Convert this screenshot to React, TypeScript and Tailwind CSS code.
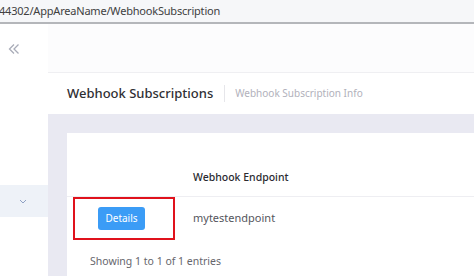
import React from 'react';

const rows = [{ endpoint: 'mytestendpoint' }];

const App = () => {
  return (
    <div className="flex flex-col w-[474px] h-[276px] overflow-hidden bg-white" style={{ fontFamily: '"Noto Sans", "Open Sans", sans-serif' }}>
      {/* address bar */}
      <div className="h-[24px] shrink-0 bg-[#f6f7f9] flex items-center border-b-2 border-[#b4b6ba]">
        <span className="text-[11px] tracking-[-0.2px] text-[#404040] ml-[-1px]">
          44302/AppAreaName/WebhookSubscription
        </span>
      </div>

      <div className="flex flex-1 min-h-0">
        {/* sidebar */}
        <div className="w-[48px] shrink-0 flex flex-col bg-white">
          <div className="h-[50px] flex items-center pl-[8px]">
            <svg width="12" height="12" viewBox="0 0 12 12" fill="none" stroke="#a9acb8" strokeWidth="1.3">
              <path d="M6 1.5 L1.5 6 L6 10.5" />
              <path d="M10.5 1.5 L6 6 L10.5 10.5" />
            </svg>
          </div>
          <div className="h-[111px]" />
          <div className="h-[32px] bg-[#eef2f8] flex items-center justify-center pr-[2px]">
            <svg width="8" height="5" viewBox="0 0 8 5" fill="none" stroke="#8fa1c4" strokeWidth="1">
              <path d="M1 1 L4 4 L7 1" />
            </svg>
          </div>
        </div>

        {/* main */}
        <div className="flex-1 flex flex-col min-w-0">
          <div className="h-[49px] shrink-0 bg-[#fcfcfd] border-b border-[#efeff2]" />
          <div className="h-[41px] shrink-0 bg-white flex items-center pl-[19px]">
            <span className="text-[13px] font-medium text-[#2f2f33]">Webhook Subscriptions</span>
            <div className="w-px h-[17px] bg-[#e6e6ea] ml-[11px] mr-[10px]" />
            <span className="text-[10px] text-[#b1b1bb]">Webhook Subscription Info</span>
          </div>
          <div className="flex-1 bg-[#e9e9f2] pl-[19px] pt-[19px]">
            <div className="bg-white h-full">
              <div className="h-[64px] flex items-end border-b border-[#eeeef2]">
                <div className="w-[126px]" />
                <span className="text-[10.5px] font-medium text-[#2a2a30] pb-[10px]">Webhook Endpoint</span>
              </div>
              {rows.map((row, index) => (
                <div className="flex items-start" key={index}>
                  <div className="w-[126px] pl-[6px]">
                    <div className="w-[102px] h-[43px] border-2 border-[#e0121c] flex items-center pl-[23px]">
                      <button className="w-[47px] h-[23px] rounded-[3px] bg-[#3b9cf6] text-white text-[10px]">
                        Details
                      </button>
                    </div>
                  </div>
                  <span className="text-[11px] text-[#55555c] mt-[13px]">{row.endpoint}</span>
                </div>
              ))}
              <div className="pl-[23px] pt-[14px] text-[10.5px] text-[#66666d]">Showing 1 to 1 of 1 entries</div>
            </div>
          </div>
        </div>
      </div>
    </div>
  );
};

export default App;
